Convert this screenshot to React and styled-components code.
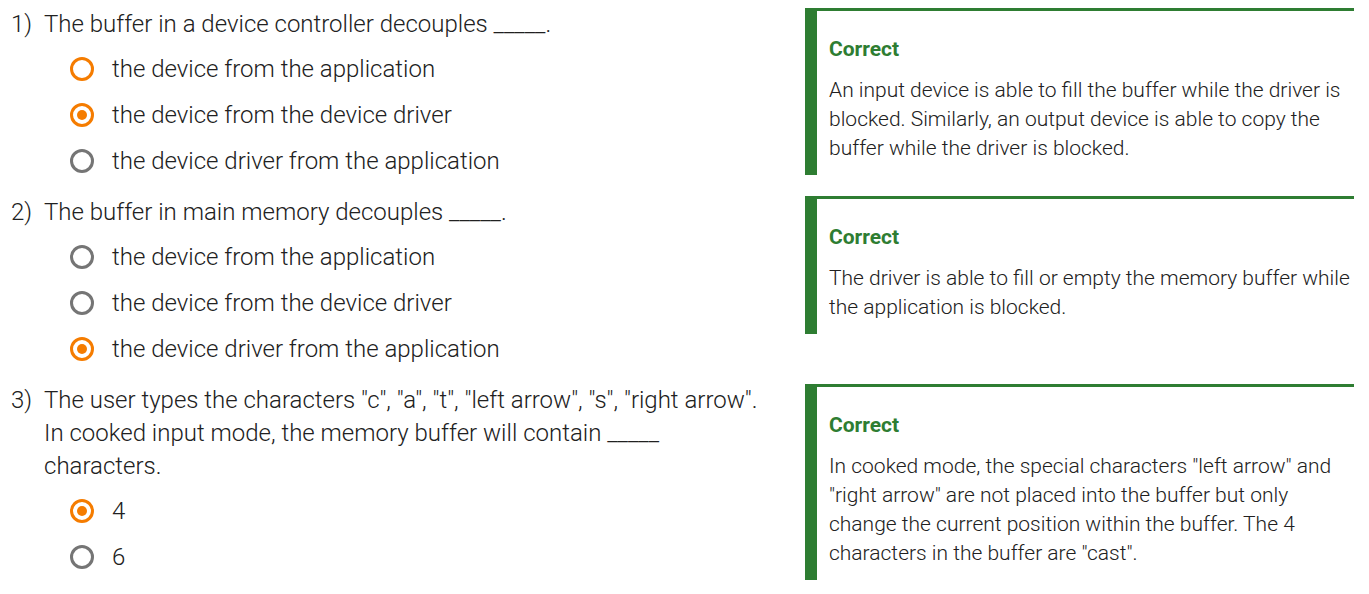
import React from 'react';
import styled, { createGlobalStyle } from 'styled-components';

const GlobalStyle = createGlobalStyle`
    body {
        margin: 8px;
        background: #ffffff;
        font-family: 'Roboto Light', Roboto, 'Noto Sans', sans-serif;
        font-weight: 300;
        color: #212121;
    }
`;

// ******************* DATA *******************
const questions = [
    {
        num: '1)',
        text: 'The buffer in a device controller decouples _____.',
        options: [
            { label: 'the device from the application', state: 'focused' },
            { label: 'the device from the device driver', state: 'checked' },
            { label: 'the device driver from the application', state: 'idle' },
        ],
        feedback: 'An input device is able to fill the buffer while the driver is blocked. Similarly, an output device is able to copy the buffer while the driver is blocked.',
    },
    {
        num: '2)',
        text: 'The buffer in main memory decouples _____.',
        options: [
            { label: 'the device from the application', state: 'idle' },
            { label: 'the device from the device driver', state: 'idle' },
            { label: 'the device driver from the application', state: 'checked' },
        ],
        feedback: 'The driver is able to fill or empty the memory buffer while the application is blocked.',
    },
    {
        num: '3)',
        text: 'The user types the characters "c", "a", "t", "left arrow", "s", "right arrow". In cooked input mode, the memory buffer will contain _____ characters.',
        options: [
            { label: '4', state: 'checked' },
            { label: '6', state: 'idle' },
        ],
        feedback: 'In cooked mode, the special characters "left arrow" and "right arrow" are not placed into the buffer but only change the current position within the buffer. The 4 characters in the buffer are "cast".',
    },
];

// ******************* LAYOUT *******************
const Page = styled.div`
    display: flex;
    flex-direction: column;
    gap: 12px;
    margin-right: 7px;
`;

const Row = styled.div`
    display: grid;
    grid-template-columns: 1fr 549px;
    align-items: start;
`;

// ******************* QUESTION *******************
const Question = styled.div`
    padding-right: 32px;
`;

const Prompt = styled.div`
    display: flex;
    font-size: 24px;
    line-height: 33px;
`;

const Num = styled.span`
    flex: 0 0 36px;
    padding-left: 3px;
    box-sizing: border-box;
`;

const Options = styled.div`
    margin-top: 5px;
    padding-left: 62px;
`;

const Option = styled.label`
    display: flex;
    align-items: center;
    gap: 18px;
    height: 46px;
    font-size: 24px;
`;

const Radio = styled.span`
    position: relative;
    flex: 0 0 24px;
    height: 24px;
    box-sizing: border-box;
    border-radius: 50%;
    border: 3.5px solid ${p => (p.$state === 'idle' ? '#757575' : '#f57c00')};

    &::after {
        content: '';
        display: ${p => (p.$state === 'checked' ? 'block' : 'none')};
        position: absolute;
        top: 3.5px;
        left: 3.5px;
        width: 10px;
        height: 10px;
        border-radius: 50%;
        background: #f57c00;
    }
`;

// ******************* FEEDBACK *******************
const Feedback = styled.div`
    border-left: 12px solid #2e7d32;
    border-top: 3px solid #2e7d32;
    padding: 24px 4px 12px 12px;
`;

const Title = styled.div`
    color: #2e7d32;
    font-family: Roboto, 'Noto Sans', sans-serif;
    font-weight: 700;
    font-size: 21px;
    line-height: 28px;
    margin-bottom: 13px;
`;

const Body = styled.div`
    font-size: 21px;
    line-height: 29px;
`;

function App() {
    return (
        <>
            <GlobalStyle />
            <Page>
                {questions.map(q => (
                    <Row key={q.num}>
                        <Question>
                            <Prompt>
                                <Num>{q.num}</Num>
                                <span>{q.text}</span>
                            </Prompt>
                            <Options>
                                {q.options.map(o => (
                                    <Option key={o.label}>
                                        <Radio $state={o.state} />
                                        <span>{o.label}</span>
                                    </Option>
                                ))}
                            </Options>
                        </Question>
                        <Feedback>
                            <Title>Correct</Title>
                            <Body>{q.feedback}</Body>
                        </Feedback>
                    </Row>
                ))}
            </Page>
        </>
    );
}

export default App;
